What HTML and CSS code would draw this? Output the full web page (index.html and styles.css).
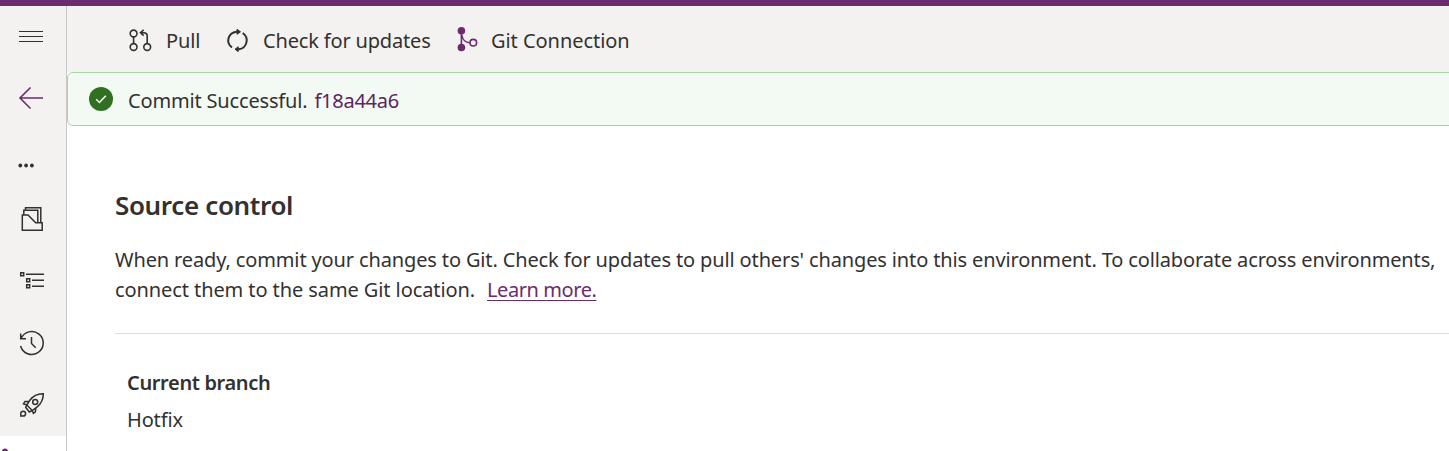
FILE: index.html
```html
<!DOCTYPE html>
<html lang="en">
<head>
<meta charset="utf-8">
<title>Source control</title>
<link rel="stylesheet" href="styles.css">
</head>
<body>
<div class="topbar"></div>
<div class="shell">
  <nav class="sidebar">
    <div class="rail">
      <svg class="icon menu" viewBox="0 0 66 60"><path d="M19 25.5h24M19 30.5h24M19 35.5h24" stroke-width="1"/></svg>
      <svg class="icon back" viewBox="0 0 66 62"><path d="M43 32H20M30.500 21.500 20 32l10.500 10.500" stroke-width="1.6"/></svg>
      <svg class="icon more" viewBox="0 0 66 60"><circle cx="20.300" cy="37.500" r="1.900"/><circle cx="26.100" cy="37.500" r="1.900"/><circle cx="31.900" cy="37.500" r="1.900"/></svg>
      <svg class="icon" viewBox="0 0 66 62"><path d="M22.300 27h5.700l7.700 7.700h6.500v7.500H22.300zM23.800 26.500v-4.300h14v12M25.500 22v-2.300h15.300v14.500"/></svg>
      <svg class="icon" viewBox="0 0 66 62"><path d="M20.700 22.700h3v3h-3zM26.700 28.700h3v3h-3zM26.700 34.700h3v3h-3zM26 24.300h18M32 30.300h12M32 36.300h12"/></svg>
      <svg class="icon" viewBox="0 0 66 62"><path d="M20.700 21.500v5.300H26M21 26.800A11.500 11.500 0 1 1 20.600 34M31.500 25V31.500l4.200 4.200"/></svg>
      <svg class="icon" viewBox="0 0 66 62"><path d="M43.300 19.700c-5.800-.2-10.300 2.300-13.300 6.300l-3.200 5 5.500 5.500 4.900-3.700c4-3.300 6.100-7.300 6.100-13.100zM29.200 27.400l-4.200.2-1.500 2.200 3.500 1.200M35.900 33.800l-.5 4-2 1.500-1.200-2.700M26.800 31l-1.100 2.300 3.600 4.700 3-1.500M20.800 42v-2.500a2.400 2.400 0 1 1 2.400 2.500z"/><circle cx="35.200" cy="28" r="2.500"/></svg>
    </div>
    <div class="current"><svg class="branch-tip" viewBox="0 0 12 15"><circle cx="5" cy="15.500" r="3"/></svg></div>
  </nav>
  <main class="main">
    <div class="toolbar">
      <button class="command pull"><svg viewBox="0 0 24 24"><circle cx="5.600" cy="4.500" r="3.400"/><circle cx="5.600" cy="18" r="3.400"/><circle cx="19.200" cy="18" r="3.400"/><path d="M5.600 8v6.500M19.200 14.500V7c0-2.600-1-3.300-3.500-3.300h-3M15.700.8l-3.200 2.900 3.200 2.900"/></svg><span>Pull</span></button>
      <button class="command check"><svg viewBox="0 0 24 24"><path d="M7 18.500C.3 13.500 3 3.800 11.500 2.700H13.500M17.700 4C24.300 8.500 22.300 19 14 20.200h-2"/><path d="m12 .3 3.500 2.500L12 5.300zM13.200 17.800 10 20.200l3.200 2.400z" fill="currentColor" stroke-width="1"/></svg><span>Check for updates</span></button>
      <button class="command git"><svg viewBox="0 0 24 24"><circle class="solid" cx="8.400" cy="1.800" r="3.800"/><circle class="solid" cx="8.400" cy="18.500" r="3.800"/><circle cx="20.300" cy="13.700" r="3.300"/><path d="M8.400 2v16M8.800 6c.5 4.500 3.700 7.500 8 7.700"/></svg><span>Git Connection</span></button>
    </div>
    <div class="banner-row">
      <div class="banner">
        <svg class="success" viewBox="0 0 24 24"><circle cx="12" cy="12" r="12"/><path d="m7.200 12.300 3.200 3.200 6.400-6.700"/></svg>
        <span class="message">Commit Successful.</span><a class="commit">f18a44a6</a>
      </div>
    </div>
    <section class="content">
      <h1>Source control</h1>
      <p class="intro"><span class="line1">When ready, commit your changes to Git. Check for updates to pull others' changes into this environment. To collaborate across environments,</span><br><span class="line2">connect them to the same Git location.</span><a class="learn">Learn more.</a></p>
      <div class="details">
        <h2>Current branch</h2>
        <div class="branch">Hotfix</div>
      </div>
    </section>
  </main>
</div>
</body>
</html>
```
FILE: styles.css
```css
* { box-sizing: border-box; }
body {
  margin: 0;
  height: 451px;
  overflow: hidden;
  background: #fff;
  color: #323130;
  font: 20px/30px "Noto Sans", sans-serif;
}
h1, h2, p { margin: 0; }
svg { display: block; flex: none; fill: none; stroke: currentColor; overflow: visible; }
.topbar { height: 6px; background: #6b2c6e; }
.shell { display: flex; height: 445px; }
.sidebar { width: 67px; flex: none; border-right: 1px solid #c8c8c8; }
.rail { height: 430px; background: #f3f2f1; }
.icon { width: 66px; height: 62px; stroke-width: 1.5; }
.icon.menu, .icon.more { height: 60px; }
.icon.back { color: #6b2c6e; }
.icon.more { fill: currentColor; stroke: none; }
.current { height: 15px; overflow: hidden; }
.branch-tip { width: 12px; height: 15px; fill: #6b2c6e; stroke: none; }
.main { flex: 1; min-width: 0; }
.toolbar { display: flex; align-items: center; height: 66px; padding: 4px 0 0 61px; background: #f3f2f1; }
.command { display: flex; align-items: center; padding: 0; border: 0; background: none; color: inherit; font: inherit; white-space: nowrap; }
.command svg { width: 24px; height: 24px; stroke-width: 1.6; }
.command span { margin-left: 14px; }
.pull { width: 97px; letter-spacing: -.15px; }
.check { width: 228px; letter-spacing: -.17px; }
.check svg { stroke-width: 2; }
.git { letter-spacing: -.05px; }
.git svg { color: #6b2c6e; }
.git .solid { fill: currentColor; stroke: none; }
.banner-row { height: 54px; overflow: hidden; }
.banner { display: flex; align-items: center; width: calc(100% + 8px); height: 54px; padding: 4px 0 0 21px; border: 1px solid #a9d3a2; border-radius: 6px; background: #f3faf3; }
.success { width: 24px; height: 24px; margin-top: -5px; fill: #316f22; stroke: none; }
.success path { fill: none; stroke: #fff; stroke-width: 1.5; }
.message { margin-left: 15px; letter-spacing: -.17px; }
.commit { margin-left: 7px; letter-spacing: -.25px; color: #5c2460; }
.content { padding: 61px 0 0 48px; }
h1 { font-size: 26px; line-height: 36px; font-weight: 600; letter-spacing: -.36px; }
.intro { height: 89px; margin-top: 22px; border-bottom: 1px solid #dddddd; white-space: nowrap; }
.line1 { letter-spacing: -.135px; }
.line2 { letter-spacing: -.09px; }
.learn { margin-left: 12px; letter-spacing: -.42px; color: #6b2c6e; text-decoration: underline; text-decoration-thickness: 1px; text-underline-offset: 3px; }
.details { padding: 34px 0 0 12px; }
h2 { font-size: 20px; line-height: 30px; font-weight: 600; letter-spacing: -.36px; }
.branch { margin-top: 7px; letter-spacing: -.15px; }
```
